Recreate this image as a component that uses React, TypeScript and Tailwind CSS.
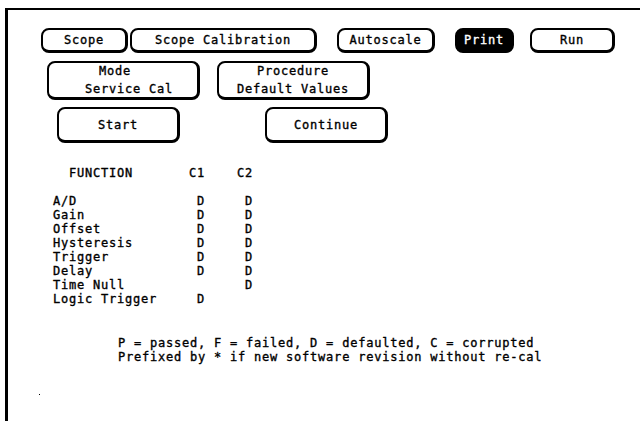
import React from "react";

const font = { fontFamily: '"DejaVu Sans Mono", "Liberation Mono", monospace' };

function Btn({
  children,
  className = "",
  dark = false,
}: {
  children: React.ReactNode;
  className?: string;
  dark?: boolean;
}) {
  return (
    <div
      className={
        "flex flex-col items-center justify-center rounded-[8px] border-2 border-b-[3px] border-r-[3px] border-black leading-[18px] " +
        (dark ? "bg-black text-white " : "bg-white text-black ") +
        className
      }
    >
      {children}
    </div>
  );
}

const rows: [string, string, string][] = [
  ["A/D", "D", "D"],
  ["Gain", "D", "D"],
  ["Offset", "D", "D"],
  ["Hysteresis", "D", "D"],
  ["Trigger", "D", "D"],
  ["Delay", "D", "D"],
  ["Time Null", " ", "D"],
  ["Logic Trigger", "D", ""],
];

export default function App() {
  const header = "  FUNCTION       C1    C2";
  const lines = rows.map(([a, b, c]) => (a.padEnd(18, " ") + b + (c ? "     " + c : "")).trimEnd());
  return (
    <div
      className="w-[640px] h-[421px] bg-white overflow-hidden text-black text-[12px] font-normal tracking-[0.78px] [-webkit-text-stroke:0.35px_currentColor]"
      style={font}
    >
      <div className="ml-[5px] mt-[8px] h-[413px] border-t-2 border-l-[3px] border-black pt-[18px]">
        <div className="flex h-[25px] items-stretch">
          <Btn className="ml-[33px] w-[87px]">Scope</Btn>
          <Btn className="ml-[2px] w-[187px]">Scope Calibration</Btn>
          <Btn className="ml-[20px] w-[98px]">Autoscale</Btn>
          <Btn className="ml-[20px] w-[59px]" dark>
            Print
          </Btn>
          <Btn className="ml-[16px] w-[85px]">Run</Btn>
        </div>
        <div className="mt-[8px] flex h-[39px]">
          <Btn className="ml-[39px] w-[153px]">
            <span className="pr-[16px]">Mode</span>
            <span className="pl-[12px]">Service Cal</span>
          </Btn>
          <Btn className="ml-[17px] w-[153px]">
            <span>Procedure</span>
            <span>Default Values</span>
          </Btn>
        </div>
        <div className="mt-[7px] flex h-[36px]">
          <Btn className="ml-[49px] w-[123px]">Start</Btn>
          <Btn className="ml-[85px] w-[123px]">Continue</Btn>
        </div>
        <pre className="mt-[23px] ml-[45px] leading-[14px] whitespace-pre" style={font}>
          {header + "\n\n" + lines.join("\n")}
        </pre>
        <pre className="mt-[30px] ml-[110px] leading-[14px] whitespace-pre" style={font}>
          {"P = passed, F = failed, D = defaulted, C = corrupted\nPrefixed by * if new software revision without re-cal"}
        </pre>
        <div className="ml-[31px] mt-[30px] h-[1px] w-[1px] bg-black" />
      </div>
    </div>
  );
}
